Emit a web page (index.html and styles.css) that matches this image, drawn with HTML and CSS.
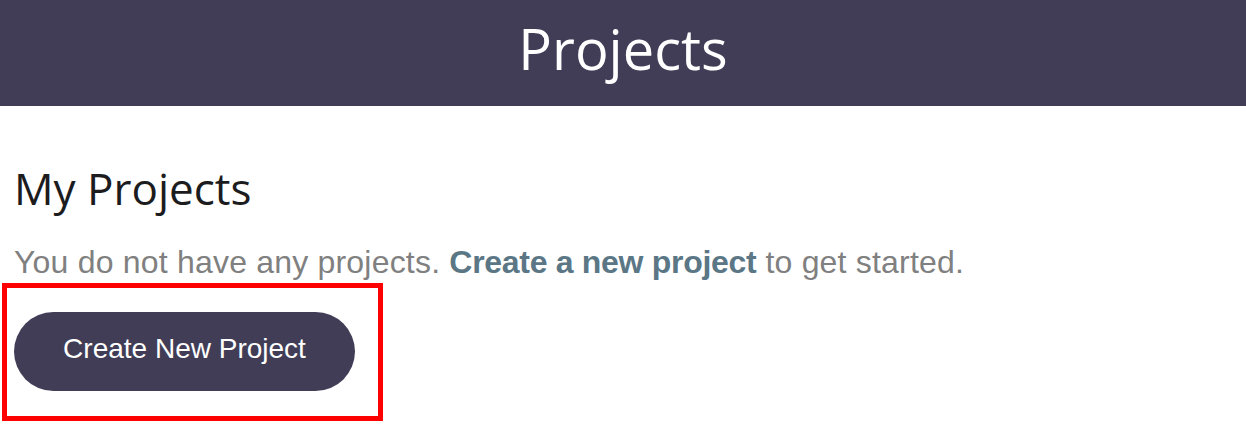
FILE: index.html
```html
<!DOCTYPE html>
<html lang="en">
<head>
    <meta charset="UTF-8">
    <meta name="viewport" content="width=device-width, initial-scale=1.0">
    <title>Projects</title>
    <link rel="stylesheet" href="styles.css">
</head>
<body>
    <header class="page-header">
        <h1>Projects</h1>
    </header>

    <section class="projects">
        <h2>My Projects</h2>
        <p class="empty-note">You do not have any projects. <a href="#" class="new-link">Create a new project</a> to get started.</p>
        <div class="highlight">
            <button type="button" class="create-button">Create New Project</button>
        </div>
    </section>
</body>
</html>
```

FILE: styles.css
```css
body {
    margin: 0;
    padding: 0;
    background-color: #ffffff;
    font-family: "Liberation Sans", Arial, sans-serif;
}

.page-header {
    background-color: #413d57;
    color: #ffffff;
    height: 106px;
    box-sizing: border-box;
    padding-top: 20px;
    text-align: center;
}

.page-header h1 {
    margin: 0;
    font-family: "Open Sans", "Noto Sans", sans-serif;
    font-weight: 400;
    font-size: 56px;
    line-height: 56px;
}

.projects {
    padding: 0 14px;
}

.projects h2 {
    margin: 60px 0 0 0;
    font-family: "Open Sans", "Noto Sans", sans-serif;
    font-weight: 400;
    font-size: 44px;
    line-height: 44px;
    color: #1c1c1e;
}

.empty-note {
    margin: 36px 0 0 0;
    font-size: 32px;
    line-height: 32px;
    letter-spacing: 0.2px;
    color: #808080;
}

.new-link {
    color: #5b7786;
    font-weight: bold;
    letter-spacing: -0.3px;
    text-decoration: none;
}

/* red frame round the button */
.highlight {
    display: inline-block;
    margin: 5px 0 0 -12px;
    padding: 24px 23px 25px 7px;
    border: 5px solid #ff0000;
}

.create-button {
    display: block;
    width: 341px;
    height: 79px;
    box-sizing: border-box;
    padding: 23px 0 28px 0;
    border: none;
    border-radius: 40px;
    background-color: #413d57;
    color: #ffffff;
    font-family: "Liberation Sans", Arial, sans-serif;
    font-size: 28px;
    line-height: 28px;
    cursor: pointer;
}
```
